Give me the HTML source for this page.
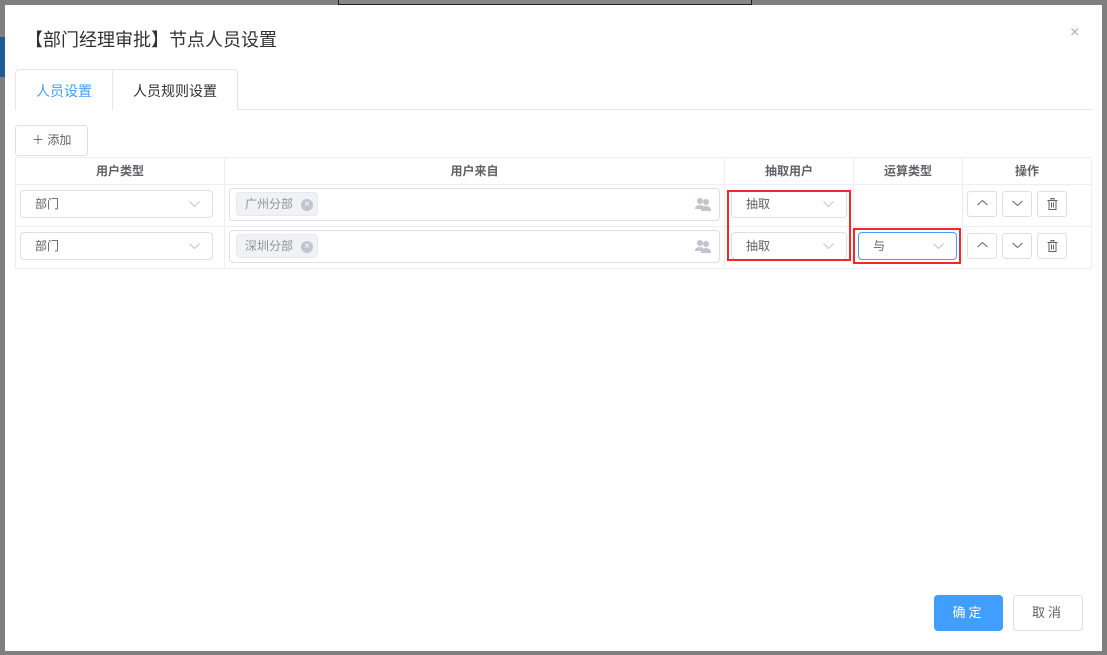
<!DOCTYPE html>
<html><head><meta charset="utf-8"><style>
*{box-sizing:border-box;margin:0;padding:0}
body{width:1107px;height:655px;background:#7f7f7f;position:relative;overflow:hidden;font-family:"Liberation Sans","Noto Sans CJK SC",sans-serif;color:#606266;font-size:13px}
.a{position:absolute}
.modal{left:5px;top:5px;width:1097px;height:646px;background:#fff}
.sel{position:absolute;border:1px solid #dcdfe6;border-radius:4px;background:#fff;font-size:12px;color:#606266;line-height:27px;padding-left:14px}
.sel svg{position:absolute;right:12px;top:10px}
.cell{position:absolute;border-right:1px solid #ebeef5;border-bottom:1px solid #ebeef5}
.th{font-size:12px;color:#606266;font-weight:bold;text-align:center;line-height:26px}
.btn{position:absolute;width:30px;height:26px;border:1px solid #dcdfe6;border-radius:3px;background:#fff}
.btn svg{position:absolute;left:9px;top:7px}
.tag{position:absolute;background:#f0f2f5;border:1px solid #e9e9eb;border-radius:4px;height:24px;font-size:12px;color:#909399;line-height:23px;padding-left:8px;width:82px}
.tag i{position:absolute;right:4px;top:6px;width:12px;height:12px;border-radius:50%;background:#c0c4cc;color:#fff;font-style:normal;font-size:10px;line-height:12px;text-align:center}
.red{position:absolute;border:2px solid #f0282a}
</style></head><body>
<div class="a" style="left:0;top:37px;width:5px;height:40px;background:#1f5b96"></div>
<div class="a" style="left:338px;top:0;width:414px;height:5px;border:1px solid #222;border-top:none;background:#888"></div>
<div class="a modal"></div>
<div class="a" style="left:25px;top:26px;font-size:18px;color:#303133">【部门经理审批】节点人员设置</div>
<div class="a" style="left:1070px;top:24px;font-size:16px;color:#aaa">×</div>
<div class="a" style="left:15px;top:109px;width:1077px;height:1px;background:#e4e7ed"></div>
<div class="a" style="left:15px;top:69px;width:223px;height:41px;border:1px solid #e4e7ed;border-bottom:none;border-radius:4px 4px 0 0;background:#fff"></div>
<div class="a" style="left:112px;top:69px;width:1px;height:41px;background:#e4e7ed"></div>
<div class="a" style="left:36px;top:81px;font-size:14px;color:#409eff">人员设置</div>
<div class="a" style="left:133px;top:81px;font-size:14px;color:#303133">人员规则设置</div>
<div class="a" style="left:15px;top:125px;width:73px;height:31px;border:1px solid #dcdfe6;border-radius:3px;font-size:12px;line-height:29px;padding-left:16px;color:#606266">＋ 添加</div>
<div class="a" style="left:15px;top:157px;width:1077px;height:112px;border-left:1px solid #ebeef5;border-top:1px solid #ebeef5"></div>
<div class="cell th" style="left:16px;top:158px;width:209px;height:27px">用户类型</div>
<div class="cell th" style="left:225px;top:158px;width:500px;height:27px">用户来自</div>
<div class="cell th" style="left:725px;top:158px;width:129px;height:27px">抽取用户</div>
<div class="cell th" style="left:854px;top:158px;width:109px;height:27px">运算类型</div>
<div class="cell th" style="left:963px;top:158px;width:129px;height:27px">操作</div>
<div class="cell" style="left:16px;top:185px;width:209px;height:42px"></div>
<div class="cell" style="left:225px;top:185px;width:500px;height:42px"></div>
<div class="cell" style="left:725px;top:185px;width:129px;height:42px"></div>
<div class="cell" style="left:854px;top:185px;width:109px;height:42px"></div>
<div class="cell" style="left:963px;top:185px;width:129px;height:42px"></div>
<div class="cell" style="left:16px;top:227px;width:209px;height:42px"></div>
<div class="cell" style="left:225px;top:227px;width:500px;height:42px"></div>
<div class="cell" style="left:725px;top:227px;width:129px;height:42px"></div>
<div class="cell" style="left:854px;top:227px;width:109px;height:42px"></div>
<div class="cell" style="left:963px;top:227px;width:129px;height:42px"></div>
<div class="sel" style="left:20px;top:190px;width:193px;height:28px">部门<svg width="11" height="7"><path d="M.5 .5L5.5 5.5L10.5 .5" fill="none" stroke="#c0c4cc"/></svg></div>
<div class="sel" style="left:20px;top:232px;width:193px;height:28px">部门<svg width="11" height="7"><path d="M.5 .5L5.5 5.5L10.5 .5" fill="none" stroke="#c0c4cc"/></svg></div>
<div class="sel" style="left:229px;top:188px;width:491px;height:33px"></div>
<div class="sel" style="left:229px;top:230px;width:491px;height:33px"></div>
<div class="tag" style="left:236px;top:192px">广州分部<i>×</i></div>
<div class="tag" style="left:236px;top:234px">深圳分部<i>×</i></div>
<svg class="a" style="left:695px;top:197px" width="16" height="14"><circle cx="5" cy="4" r="3" fill="#c0c4cc"/><circle cx="11" cy="5" r="3" fill="#c0c4cc"/><path d="M0 12Q0 8 5 8Q9 8 9 12ZM6 14Q6 9 11 9Q16 9 16 14Z" fill="#c0c4cc"/></svg>
<svg class="a" style="left:695px;top:239px" width="16" height="14"><circle cx="5" cy="4" r="3" fill="#c0c4cc"/><circle cx="11" cy="5" r="3" fill="#c0c4cc"/><path d="M0 12Q0 8 5 8Q9 8 9 12ZM6 14Q6 9 11 9Q16 9 16 14Z" fill="#c0c4cc"/></svg>
<div class="sel" style="left:731px;top:190px;width:116px;height:28px">抽取<svg width="11" height="7"><path d="M.5 .5L5.5 5.5L10.5 .5" fill="none" stroke="#c0c4cc"/></svg></div>
<div class="sel" style="left:731px;top:232px;width:116px;height:28px">抽取<svg width="11" height="7"><path d="M.5 .5L5.5 5.5L10.5 .5" fill="none" stroke="#c0c4cc"/></svg></div>
<div class="sel" style="left:858px;top:232px;width:99px;height:28px;border-color:#409eff">与<svg width="11" height="7"><path d="M.5 .5L5.5 5.5L10.5 .5" fill="none" stroke="#c0c4cc"/></svg></div>
<div class="red" style="left:727px;top:190px;width:124px;height:71px"></div>
<div class="red" style="left:853px;top:228px;width:108px;height:36px"></div>
<div class="btn" style="left:967px;top:191px"><svg width="11" height="8"><path d="M.5 6L5.5 1.5L10.5 6" fill="none" stroke="#606266"/></svg></div>
<div class="btn" style="left:1002px;top:191px"><svg width="11" height="8"><path d="M.5 2L5.5 6.5L10.5 2" fill="none" stroke="#606266"/></svg></div>
<div class="btn" style="left:1037px;top:191px"><svg width="11" height="12" style="top:6px"><path d="M.5 2.5H10.5M4 2.5V.5H7V2.5M2 2.5V11.5H9V2.5M4.5 4.5V9.5M6.5 4.5V9.5" fill="none" stroke="#606266"/></svg></div>
<div class="btn" style="left:967px;top:233px"><svg width="11" height="8"><path d="M.5 6L5.5 1.5L10.5 6" fill="none" stroke="#606266"/></svg></div>
<div class="btn" style="left:1002px;top:233px"><svg width="11" height="8"><path d="M.5 2L5.5 6.5L10.5 2" fill="none" stroke="#606266"/></svg></div>
<div class="btn" style="left:1037px;top:233px"><svg width="11" height="12" style="top:6px"><path d="M.5 2.5H10.5M4 2.5V.5H7V2.5M2 2.5V11.5H9V2.5M4.5 4.5V9.5M6.5 4.5V9.5" fill="none" stroke="#606266"/></svg></div>
<div class="a" style="left:934px;top:595px;width:69px;height:36px;background:#409eff;border-radius:4px;color:#fff;font-size:13px;text-align:center;line-height:36px;letter-spacing:3px">确定</div>
<div class="a" style="left:1013px;top:595px;width:70px;height:36px;border:1px solid #dcdfe6;border-radius:4px;color:#606266;font-size:13px;text-align:center;line-height:34px;letter-spacing:3px">取消</div>
</body></html>
